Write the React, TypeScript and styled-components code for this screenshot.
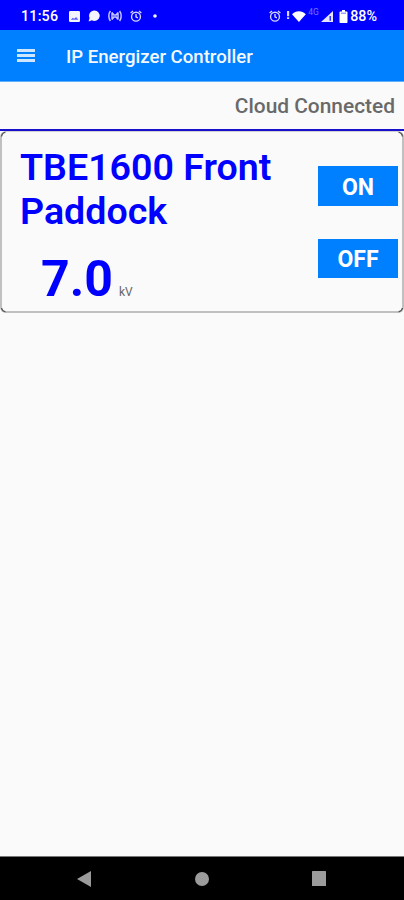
import React from "react";
import styled, { createGlobalStyle } from "styled-components";

const GlobalStyle = createGlobalStyle`
  * { box-sizing: border-box; }
  body { margin: 0; background: #fafafa; font-family: Roboto, sans-serif; }
`;

const Screen = styled.div`
  width: 404px;
  height: 900px;
  display: flex;
  flex-direction: column;
  background: #fafafa;
  overflow: hidden;
`;

const StatusBar = styled.header`
  height: 30px;
  flex: none;
  display: flex;
  align-items: center;
  justify-content: space-between;
  padding: 2px 27px 0 21px;
  background: #0000ff;
  color: #fff;
`;

const StatusGroup = styled.div<{ $gap: number }>`
  display: flex;
  align-items: center;
  gap: ${(p) => p.$gap}px;
`;

const Clock = styled.span`
  width: 40px;
  font-size: 14.3px;
  font-weight: 500;
  line-height: 18px;
  letter-spacing: 0.2px;
`;

const BatteryLevel = styled.span`
  font-size: 14.3px;
  font-weight: 500;
  line-height: 18px;
`;

const NetworkText = styled.span`
  font-size: 8.5px;
  line-height: 10px;
  color: #7373ff;
  margin-bottom: 9px;
`;

const Glyph = styled.svg`
  display: block;
  flex: none;
  overflow: visible;
`;

const DotGlyph = styled(Glyph)`
  margin-left: 3px;
`;

const WifiGlyph = styled(Glyph)`
  margin-left: 3px;
`;

const SignalGlyph = styled(Glyph)`
  margin-right: 3px;
`;

const AppBar = styled.div`
  height: 52px;
  flex: none;
  display: flex;
  align-items: center;
  gap: 31px;
  padding: 3px 17px 0;
  background: #0080ff;
  border-bottom: 1px solid #5fadfb;
`;

const MenuButton = styled.button`
  width: 18px;
  height: 13px;
  padding: 0;
  border: 0;
  background: none;
  display: flex;
  flex-direction: column;
  justify-content: space-between;
  margin-bottom: 3px;
`;

const MenuLine = styled.span`
  height: 3px;
  background: #cfe6ff;
`;

const AppTitle = styled.h1`
  margin: 0;
  font-size: 18.6px;
  font-weight: 500;
  line-height: 24px;
  color: #f4f9ff;
`;

const ConnectionRow = styled.div`
  height: 49px;
  flex: none;
  display: flex;
  align-items: center;
  justify-content: flex-end;
  padding: 1px 9px 0 0;
  border-bottom: 2px solid #1810cc;
  font-size: 20.9px;
  font-weight: 500;
  color: #696969;
`;

const DeviceCard = styled.section`
  position: relative;
  height: 182px;
  flex: none;
  display: flex;
  justify-content: space-between;
  padding: 13px 4px 0 18px;
  border: 2px solid #c0c0c0;
  border-top: 1px solid #d0d0d0;
  border-radius: 6px;
`;

const CornerMarks = styled.svg`
  position: absolute;
  inset: -1px -2px -2px;
  width: 404px;
  height: 182px;
  pointer-events: none;
`;

const DeviceInfo = styled.div`
  width: 270px;
`;

const DeviceName = styled.h2`
  margin: 0;
  font-size: 37.6px;
  font-weight: 600;
  line-height: 44px;
  color: #0000ff;
`;

const Reading = styled.div`
  display: flex;
  align-items: baseline;
  gap: 6px;
  padding: 16px 0 0 21px;
`;

const Value = styled.span`
  font-size: 50px;
  font-weight: 700;
  line-height: 60px;
  color: #0000ff;
`;

const Unit = styled.span`
  font-size: 12px;
  color: #666;
`;

const Controls = styled.div`
  display: flex;
  flex-direction: column;
  gap: 33px;
  padding-top: 21px;
`;

const PowerButton = styled.button`
  width: 80px;
  height: 39.5px;
  padding: 3px 0 0;
  border: 0;
  background: #0080ff;
  color: #fff;
  font: 700 23px Roboto, sans-serif;
`;

const NavBar = styled.nav`
  height: 44px;
  flex: none;
  margin-top: auto;
  display: flex;
  align-items: center;
  justify-content: space-between;
  padding: 0 78px 0 77px;
  background: #000;
  border-top: 1px solid #777;
`;

const AlarmIcon = () => (
  <Glyph width="12" height="12" viewBox="0 0 13 13" fill="none" stroke="#d5d5ff" strokeWidth="1.5">
    <circle cx="6.5" cy="7.2" r="4.8" />
    <path d="M.7 3.2 3.3 1M12.3 3.2 9.7 1M6.5 4.4v3l2 1.2" />
  </Glyph>
);

const ImageIcon = () => (
  <Glyph width="11" height="11" viewBox="0 0 11 11">
    <rect width="11" height="11" rx="1.3" fill="#f4f4ff" />
    <path d="m1.8 8.8 2-2.1 1.4 1.1 1.9-1.9 2.3 2.9z" fill="#5a5aff" />
  </Glyph>
);

const ChatIcon = () => (
  <Glyph width="12" height="12" viewBox="0 0 12 12" fill="#f4f4ff">
    <path d="M6.3.6a5.2 5.2 0 1 1-2.4 9.7L.6 11.4l1-3.3A5.2 5.2 0 0 1 6.3.6z" />
  </Glyph>
);

const BroadcastIcon = () => (
  <Glyph width="14" height="12" viewBox="0 0 14 12" fill="none" stroke="#c5c5ff" strokeWidth="1.5">
    <path d="M2.4 1C.3 3.8.3 8.2 2.4 11M11.6 1c2.1 2.8 2.1 7.2 0 10M4 2.4 5.8 5h2.4L10 2.4M4 9.6 5.8 7h2.4L10 9.6M4 2.4v7.2M10 2.4v7.2" />
  </Glyph>
);

const DotIcon = () => (
  <DotGlyph width="4" height="4" viewBox="0 0 4 4" fill="#f4f4ff">
    <circle cx="2" cy="2" r="1.8" />
  </DotGlyph>
);

const WifiIcon = () => (
  <WifiGlyph width="19" height="12" viewBox="0 0 19 12" fill="#fff">
    <path d="M0 1h2.2v5.2H0zM0 7.2h2.2V9H0z" fill="#d5d5ff" />
    <path d="M5 4.2C8.6.2 15.2.2 18.8 4.2L11.9 12z" />
  </WifiGlyph>
);

const SignalIcon = () => (
  <SignalGlyph width="12" height="11" viewBox="0 0 12 11" fill="#e5e5ff">
    <path d="M0 11 12 0v11z" />
    <path d="M8.5 5h1.5v4.7H8.5z" fill="#3030ff" />
  </SignalGlyph>
);

const BatteryIcon = () => (
  <Glyph width="9" height="13" viewBox="0 0 8 13" fill="#fff">
    <path d="M2.5 0h3v1.5h1.7q.8 0 .8.8v9.9q0 .8-.8.8H.8q-.8 0-.8-.8V2.3q0-.8.8-.8h1.7z" />
    <path d="M1.5 3.2h5" stroke="#7070ff" />
  </Glyph>
);

export default function App() {
  return (
    <>
      <GlobalStyle />
      <Screen>
        <StatusBar>
          <StatusGroup $gap={8}>
            <Clock>11:56</Clock>
            <ImageIcon />
            <ChatIcon />
            <BroadcastIcon />
            <AlarmIcon />
            <DotIcon />
          </StatusGroup>
          <StatusGroup $gap={2.5}>
            <AlarmIcon />
            <WifiIcon />
            <NetworkText>4G</NetworkText>
            <SignalIcon />
            <BatteryIcon />
            <BatteryLevel>88%</BatteryLevel>
          </StatusGroup>
        </StatusBar>
        <AppBar>
          <MenuButton aria-label="Menu">
            <MenuLine />
            <MenuLine />
            <MenuLine />
          </MenuButton>
          <AppTitle>IP Energizer Controller</AppTitle>
        </AppBar>
        <ConnectionRow>Cloud Connected</ConnectionRow>
        <DeviceCard>
          <CornerMarks viewBox="0 0 404 182" fill="none" stroke="#555" strokeWidth="1.3">
            <path d="M1.5 5.5Q2 2 5.5 1.2M398.5 1.2Q402 2 402.5 5.5M1.5 177Q2 180 5.5 181M398.5 181Q402 180 402.5 177" />
          </CornerMarks>
          <DeviceInfo>
            <DeviceName>TBE1600 Front Paddock</DeviceName>
            <Reading>
              <Value>7.0</Value>
              <Unit>kV</Unit>
            </Reading>
          </DeviceInfo>
          <Controls>
            <PowerButton>ON</PowerButton>
            <PowerButton>OFF</PowerButton>
          </Controls>
        </DeviceCard>
        <NavBar>
          <Glyph width="14" height="16" viewBox="0 0 14 16" fill="#9b9b9b">
            <path d="M0 8 14 0v16z" />
          </Glyph>
          <Glyph width="14" height="14" viewBox="0 0 14 14" fill="#9b9b9b">
            <circle cx="7" cy="7" r="7" />
          </Glyph>
          <Glyph width="14" height="15" viewBox="0 0 14 15" fill="#9b9b9b">
            <rect width="14" height="15" rx=".5" />
          </Glyph>
        </NavBar>
      </Screen>
    </>
  );
}
